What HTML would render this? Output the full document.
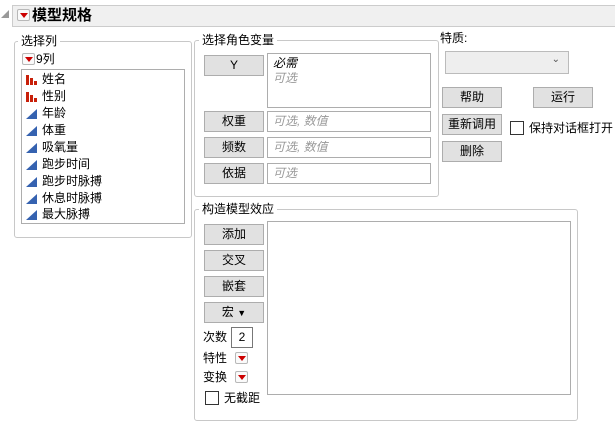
<!DOCTYPE html>
<html><head><meta charset="utf-8"><style>
*{box-sizing:border-box;margin:0;padding:0}
body{width:615px;height:422px;background:#fff;font-family:"Liberation Sans","Noto Sans CJK SC",sans-serif;font-size:12px;color:#000;position:relative;overflow:hidden}
.a{position:absolute}
.grp{position:absolute;border:1px solid #c8c8c8;border-radius:3px}
.lbl{position:absolute;background:#fff;padding:0 3px;line-height:14px;white-space:nowrap}
.btn{position:absolute;background:#e1e1e1;border:1px solid #adadad;text-align:center;line-height:18px;white-space:nowrap}
.box{position:absolute;border:1px solid #adadad;background:#fff}
.ph{color:#999;font-style:italic;position:absolute;left:5px;line-height:18px}
.rb{position:absolute;width:13px;height:12px;border:1px solid #b8b8b8;border-radius:2px;background:#fafafa}
.rb:after{content:"";position:absolute;left:2px;top:3px;border-left:4px solid transparent;border-right:4px solid transparent;border-top:5px solid #c00}
.cb{position:absolute;width:14px;height:14px;border:1px solid #333;background:#fff}
.it{position:absolute;left:26px;height:17px;line-height:17px;white-space:nowrap}
.it svg{position:absolute;left:0;top:4px}
.it span{margin-left:16px}
</style></head><body>
<div class="a" style="left:1px;top:10px;border-bottom:8px solid #999;border-left:8px solid transparent;width:0;height:0"></div>
<div class="a" style="left:12px;top:5px;width:603px;height:22px;background:#f0f0f0;border:1px solid #ccc;border-right:none"></div>
<div class="rb" style="left:17px;top:9px"></div>
<div class="a" style="left:32px;top:6px;font-size:15px;font-weight:bold;line-height:20px">模型规格</div>

<div class="grp" style="left:14px;top:41px;width:178px;height:197px"></div>
<div class="lbl" style="left:18px;top:34px">选择列</div>
<div class="rb" style="left:22px;top:53px"></div>
<div class="a" style="left:36px;top:52px;line-height:14px">9列</div>
<div class="box" style="left:21px;top:69px;width:164px;height:155px"></div>
<div class="it" style="top:71px"><svg width="11" height="10"><path d="M0 0h3v10h-3zM4 3h3v7h-3zM8 6h3v4h-3z" fill="#c8200a"/></svg><span>姓名</span></div>
<div class="it" style="top:88px"><svg width="11" height="10"><path d="M0 0h3v10h-3zM4 3h3v7h-3zM8 6h3v4h-3z" fill="#c8200a"/></svg><span>性别</span></div>
<div class="it" style="top:105px"><svg width="11" height="10"><path d="M11 0V10H0z" fill="#3562b0"/></svg><span>年龄</span></div>
<div class="it" style="top:122px"><svg width="11" height="10"><path d="M11 0V10H0z" fill="#3562b0"/></svg><span>体重</span></div>
<div class="it" style="top:139px"><svg width="11" height="10"><path d="M11 0V10H0z" fill="#3562b0"/></svg><span>吸氧量</span></div>
<div class="it" style="top:156px"><svg width="11" height="10"><path d="M11 0V10H0z" fill="#3562b0"/></svg><span>跑步时间</span></div>
<div class="it" style="top:173px"><svg width="11" height="10"><path d="M11 0V10H0z" fill="#3562b0"/></svg><span>跑步时脉搏</span></div>
<div class="it" style="top:190px"><svg width="11" height="10"><path d="M11 0V10H0z" fill="#3562b0"/></svg><span>休息时脉搏</span></div>
<div class="it" style="top:206px"><svg width="11" height="10"><path d="M11 0V10H0z" fill="#3562b0"/></svg><span>最大脉搏</span></div>

<div class="grp" style="left:194px;top:40px;width:245px;height:157px"></div>
<div class="lbl" style="left:199px;top:33px">选择角色变量</div>
<div class="btn" style="left:204px;top:55px;width:60px;height:21px">Y</div>
<div class="box" style="left:267px;top:53px;width:164px;height:55px"><span class="a" style="left:5px;top:1px;font-style:italic;line-height:16px">必需</span><span class="ph" style="top:15px">可选</span></div>
<div class="btn" style="left:204px;top:111px;width:60px;height:21px">权重</div>
<div class="box" style="left:267px;top:111px;width:164px;height:21px"><span class="ph">可选, 数值</span></div>
<div class="btn" style="left:204px;top:137px;width:60px;height:21px">频数</div>
<div class="box" style="left:267px;top:137px;width:164px;height:21px"><span class="ph">可选, 数值</span></div>
<div class="btn" style="left:204px;top:163px;width:60px;height:21px">依据</div>
<div class="box" style="left:267px;top:163px;width:164px;height:21px"><span class="ph">可选</span></div>

<div class="a" style="left:440px;top:31px;line-height:14px">特质:</div>
<div class="a" style="left:445px;top:51px;width:124px;height:23px;border:1px solid #bbb;background:#eee"><span class="a" style="right:8px;top:2px;font-size:10px;color:#555">⌄</span></div>
<div class="btn" style="left:442px;top:87px;width:60px;height:21px">帮助</div>
<div class="btn" style="left:533px;top:87px;width:60px;height:21px">运行</div>
<div class="btn" style="left:442px;top:114px;width:60px;height:21px">重新调用</div>
<div class="cb" style="left:510px;top:121px"></div>
<div class="a" style="left:529px;top:120px;line-height:16px;white-space:nowrap">保持对话框打开</div>
<div class="btn" style="left:442px;top:141px;width:60px;height:21px">删除</div>

<div class="grp" style="left:194px;top:209px;width:384px;height:212px"></div>
<div class="lbl" style="left:199px;top:202px">构造模型效应</div>
<div class="btn" style="left:204px;top:224px;width:60px;height:21px">添加</div>
<div class="btn" style="left:204px;top:250px;width:60px;height:21px">交叉</div>
<div class="btn" style="left:204px;top:276px;width:60px;height:21px">嵌套</div>
<div class="btn" style="left:204px;top:302px;width:60px;height:21px">宏 <span style="font-size:9px">▼</span></div>
<div class="a" style="left:203px;top:329px;line-height:16px">次数</div>
<div class="box" style="left:231px;top:327px;width:22px;height:21px;border-color:#777;text-align:center;line-height:18px">2</div>
<div class="a" style="left:203px;top:350px;line-height:16px">特性</div>
<div class="rb" style="left:235px;top:352px"></div>
<div class="a" style="left:203px;top:369px;line-height:16px">变换</div>
<div class="rb" style="left:235px;top:371px"></div>
<div class="cb" style="left:205px;top:391px"></div>
<div class="a" style="left:224px;top:390px;line-height:16px">无截距</div>
<div class="box" style="left:267px;top:221px;width:304px;height:174px"></div>
</body></html>
